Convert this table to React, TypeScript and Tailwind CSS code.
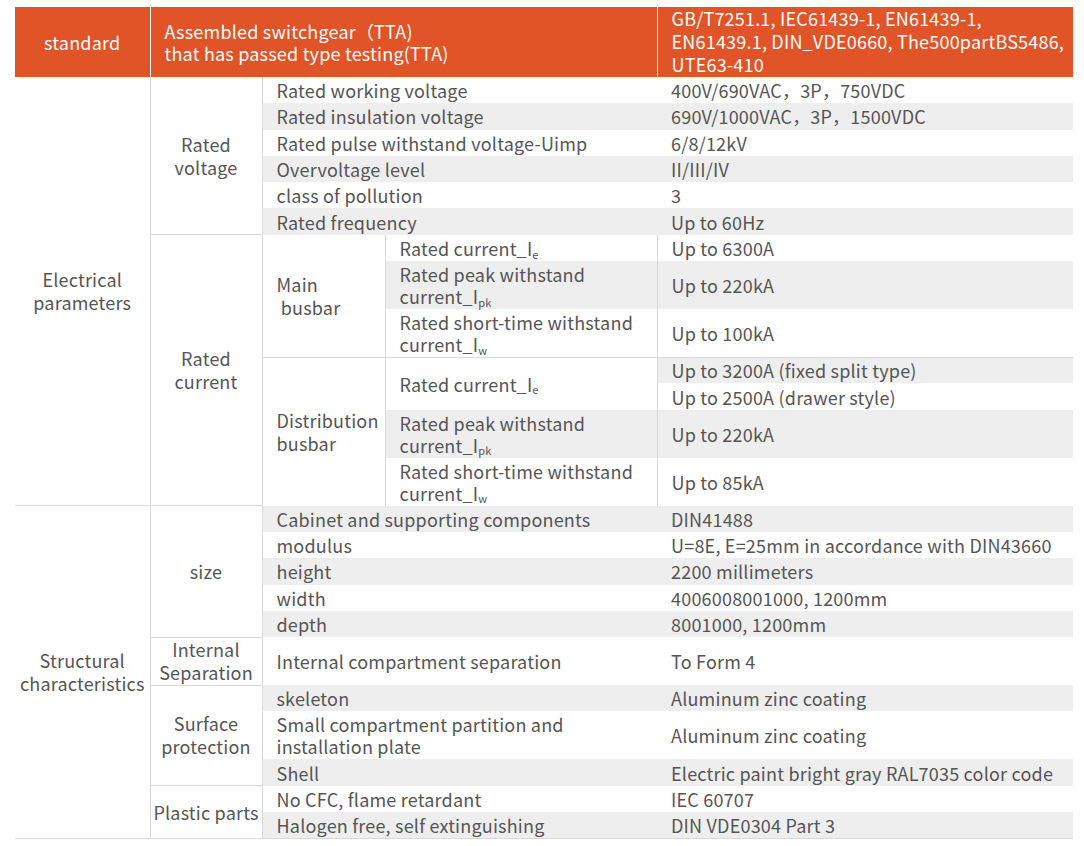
import type { ReactNode } from "react";

const FONT = { fontFamily: '"Noto Sans CJK SC", "Noto Sans", sans-serif' };

const line = "border-[#d9d9d9]";
const gray = "bg-[#eeeeee]";

function Group({ children, rows, className = "" }: { children: ReactNode; rows: number; className?: string }) {
  return (
    <td rowSpan={rows} className={`border-r ${line} px-0 text-center align-middle leading-[23px] whitespace-nowrap ${className}`}>
      {children}
    </td>
  );
}

function Item({ children, span = 1, shade = false }: { children: ReactNode; span?: number; shade?: boolean }) {
  return (
    <td colSpan={span} className={`px-[14px] text-left align-middle leading-[22px] whitespace-nowrap ${shade ? gray : ""}`}>
      {children}
    </td>
  );
}

function Value({ children, shade = false, edge = false }: { children: ReactNode; shade?: boolean; edge?: boolean }) {
  return (
    <td className={`px-[14px] text-left align-middle leading-[22px] whitespace-nowrap ${edge ? `border-l ${line}` : ""} ${shade ? gray : ""}`}>
      {children}
    </td>
  );
}

const Sub = ({ children }: { children: ReactNode }) => <sub className="text-[11px]">{children}</sub>;

export default function App() {
  const one = "h-[26.3px]";
  const two = "h-[48px]";

  return (
    <div className="min-h-[846px] bg-white pt-[7px] pl-[15px] text-[18px] tracking-[0.2px] text-[#555555]" style={FONT}>
      <table className="w-[1058px] table-fixed border-collapse">
        <colgroup>
          <col className="w-[135px]" />
          <col className="w-[112px]" />
          <col className="w-[123px]" />
          <col className="w-[272px]" />
          <col className="w-[416px]" />
        </colgroup>
        <tbody>
          <tr className="h-[70px] bg-[#e05428] text-white">
            <th className="border-r border-white text-center font-normal">standard</th>
            <th colSpan={3} className="border-r border-white px-[14px] text-left font-normal leading-[22px]">
              Assembled switchgear（TTA)
              <br />
              that has passed type testing(TTA)
            </th>
            <th className="px-[14px] text-left align-top font-normal leading-[23px] whitespace-nowrap">
              GB/T7251.1, IEC61439-1, EN61439-1,
              <br />
              EN61439.1, DIN_VDE0660, The500partBS5486,
              <br />
              UTE63-410
            </th>
          </tr>

          {/* electrical parameters */}
          <tr className={one}>
            <Group rows={13}>
              Electrical
              <br />
              parameters
            </Group>
            <Group rows={6}>
              Rated
              <br />
              voltage
            </Group>
            <Item span={2}>Rated working voltage</Item>
            <Value>400V/690VAC，3P，750VDC</Value>
          </tr>
          <tr className={one}>
            <Item span={2} shade>Rated insulation voltage</Item>
            <Value shade>690V/1000VAC，3P，1500VDC</Value>
          </tr>
          <tr className={one}>
            <Item span={2}>Rated pulse withstand voltage-Uimp</Item>
            <Value>6/8/12kV</Value>
          </tr>
          <tr className={one}>
            <Item span={2} shade>Overvoltage level</Item>
            <Value shade>II/III/IV</Value>
          </tr>
          <tr className={one}>
            <Item span={2}>class of pollution</Item>
            <Value>3</Value>
          </tr>
          <tr className={one}>
            <Item span={2} shade>Rated frequency</Item>
            <Value shade>Up to 60Hz</Value>
          </tr>

          <tr className={one}>
            <Group rows={7} className={`border-t ${line}`}>
              Rated
              <br />
              current
            </Group>
            <td rowSpan={3} className={`border-r ${line} px-[14px] text-left align-middle leading-[23px]`}>
              Main
              <br />
              {"\u00a0"}busbar
            </td>
            <Item>
              Rated current_I<Sub>e</Sub>
            </Item>
            <Value edge>Up to 6300A</Value>
          </tr>
          <tr className={two}>
            <Item shade>
              Rated peak withstand
              <br />
              current_I<Sub>pk</Sub>
            </Item>
            <Value shade edge>Up to 220kA</Value>
          </tr>
          <tr className={two}>
            <Item>
              Rated short-time withstand
              <br />
              current_I<Sub>w</Sub>
            </Item>
            <Value edge>Up to 100kA</Value>
          </tr>

          <tr className={one}>
            <td rowSpan={4} className={`border-t border-r ${line} px-[14px] text-left align-middle leading-[23px]`}>
              Distribution
              <br />
              busbar
            </td>
            <td rowSpan={2} className={`border-t ${line} px-[14px] text-left align-middle leading-[22px]`}>
              Rated current_I<Sub>e</Sub>
            </td>
            <td className={`border-t border-l ${line} ${gray} px-[14px] text-left align-middle leading-[22px]`}>
              Up to 3200A (fixed split type)
            </td>
          </tr>
          <tr className={one}>
            <Value edge>Up to 2500A (drawer style)</Value>
          </tr>
          <tr className={two}>
            <Item shade>
              Rated peak withstand
              <br />
              current_I<Sub>pk</Sub>
            </Item>
            <Value shade edge>Up to 220kA</Value>
          </tr>
          <tr className={two}>
            <Item>
              Rated short-time withstand
              <br />
              current_I<Sub>w</Sub>
            </Item>
            <Value edge>Up to 85kA</Value>
          </tr>

          {/* structural characteristics */}
          <tr className={one}>
            <Group rows={11} className={`border-t border-b ${line}`}>
              Structural
              <br />
              characteristics
            </Group>
            <Group rows={5} className={`border-t ${line}`}>
              size
            </Group>
            <Item span={2} shade>Cabinet and supporting components</Item>
            <Value shade>DIN41488</Value>
          </tr>
          <tr className={one}>
            <Item span={2}>modulus</Item>
            <Value>U=8E, E=25mm in accordance with DIN43660</Value>
          </tr>
          <tr className={one}>
            <Item span={2} shade>height</Item>
            <Value shade>2200 millimeters</Value>
          </tr>
          <tr className={one}>
            <Item span={2}>width</Item>
            <Value>4006008001000, 1200mm</Value>
          </tr>
          <tr className={one}>
            <Item span={2} shade>depth</Item>
            <Value shade>8001000, 1200mm</Value>
          </tr>
          <tr className={two}>
            <Group rows={1} className={`border-t ${line}`}>
              Internal
              <br />
              Separation
            </Group>
            <Item span={2}>Internal compartment separation</Item>
            <Value>To Form 4</Value>
          </tr>
          <tr className={one}>
            <Group rows={3} className={`border-t ${line}`}>
              Surface
              <br />
              protection
            </Group>
            <Item span={2} shade>skeleton</Item>
            <Value shade>Aluminum zinc coating</Value>
          </tr>
          <tr className={two}>
            <Item span={2}>
              Small compartment partition and
              <br />
              installation plate
            </Item>
            <Value>Aluminum zinc coating</Value>
          </tr>
          <tr className={one}>
            <Item span={2} shade>Shell</Item>
            <Value shade>Electric paint bright gray RAL7035 color code</Value>
          </tr>
          <tr className={one}>
            <Group rows={2} className={`border-t border-b ${line}`}>
              Plastic parts
            </Group>
            <Item span={2}>No CFC, flame retardant</Item>
            <Value>IEC 60707</Value>
          </tr>
          <tr className={`${one} border-b ${line}`}>
            <Item span={2} shade>Halogen free, self extinguishing</Item>
            <Value shade>DIN VDE0304 Part 3</Value>
          </tr>
        </tbody>
      </table>
    </div>
  );
}
